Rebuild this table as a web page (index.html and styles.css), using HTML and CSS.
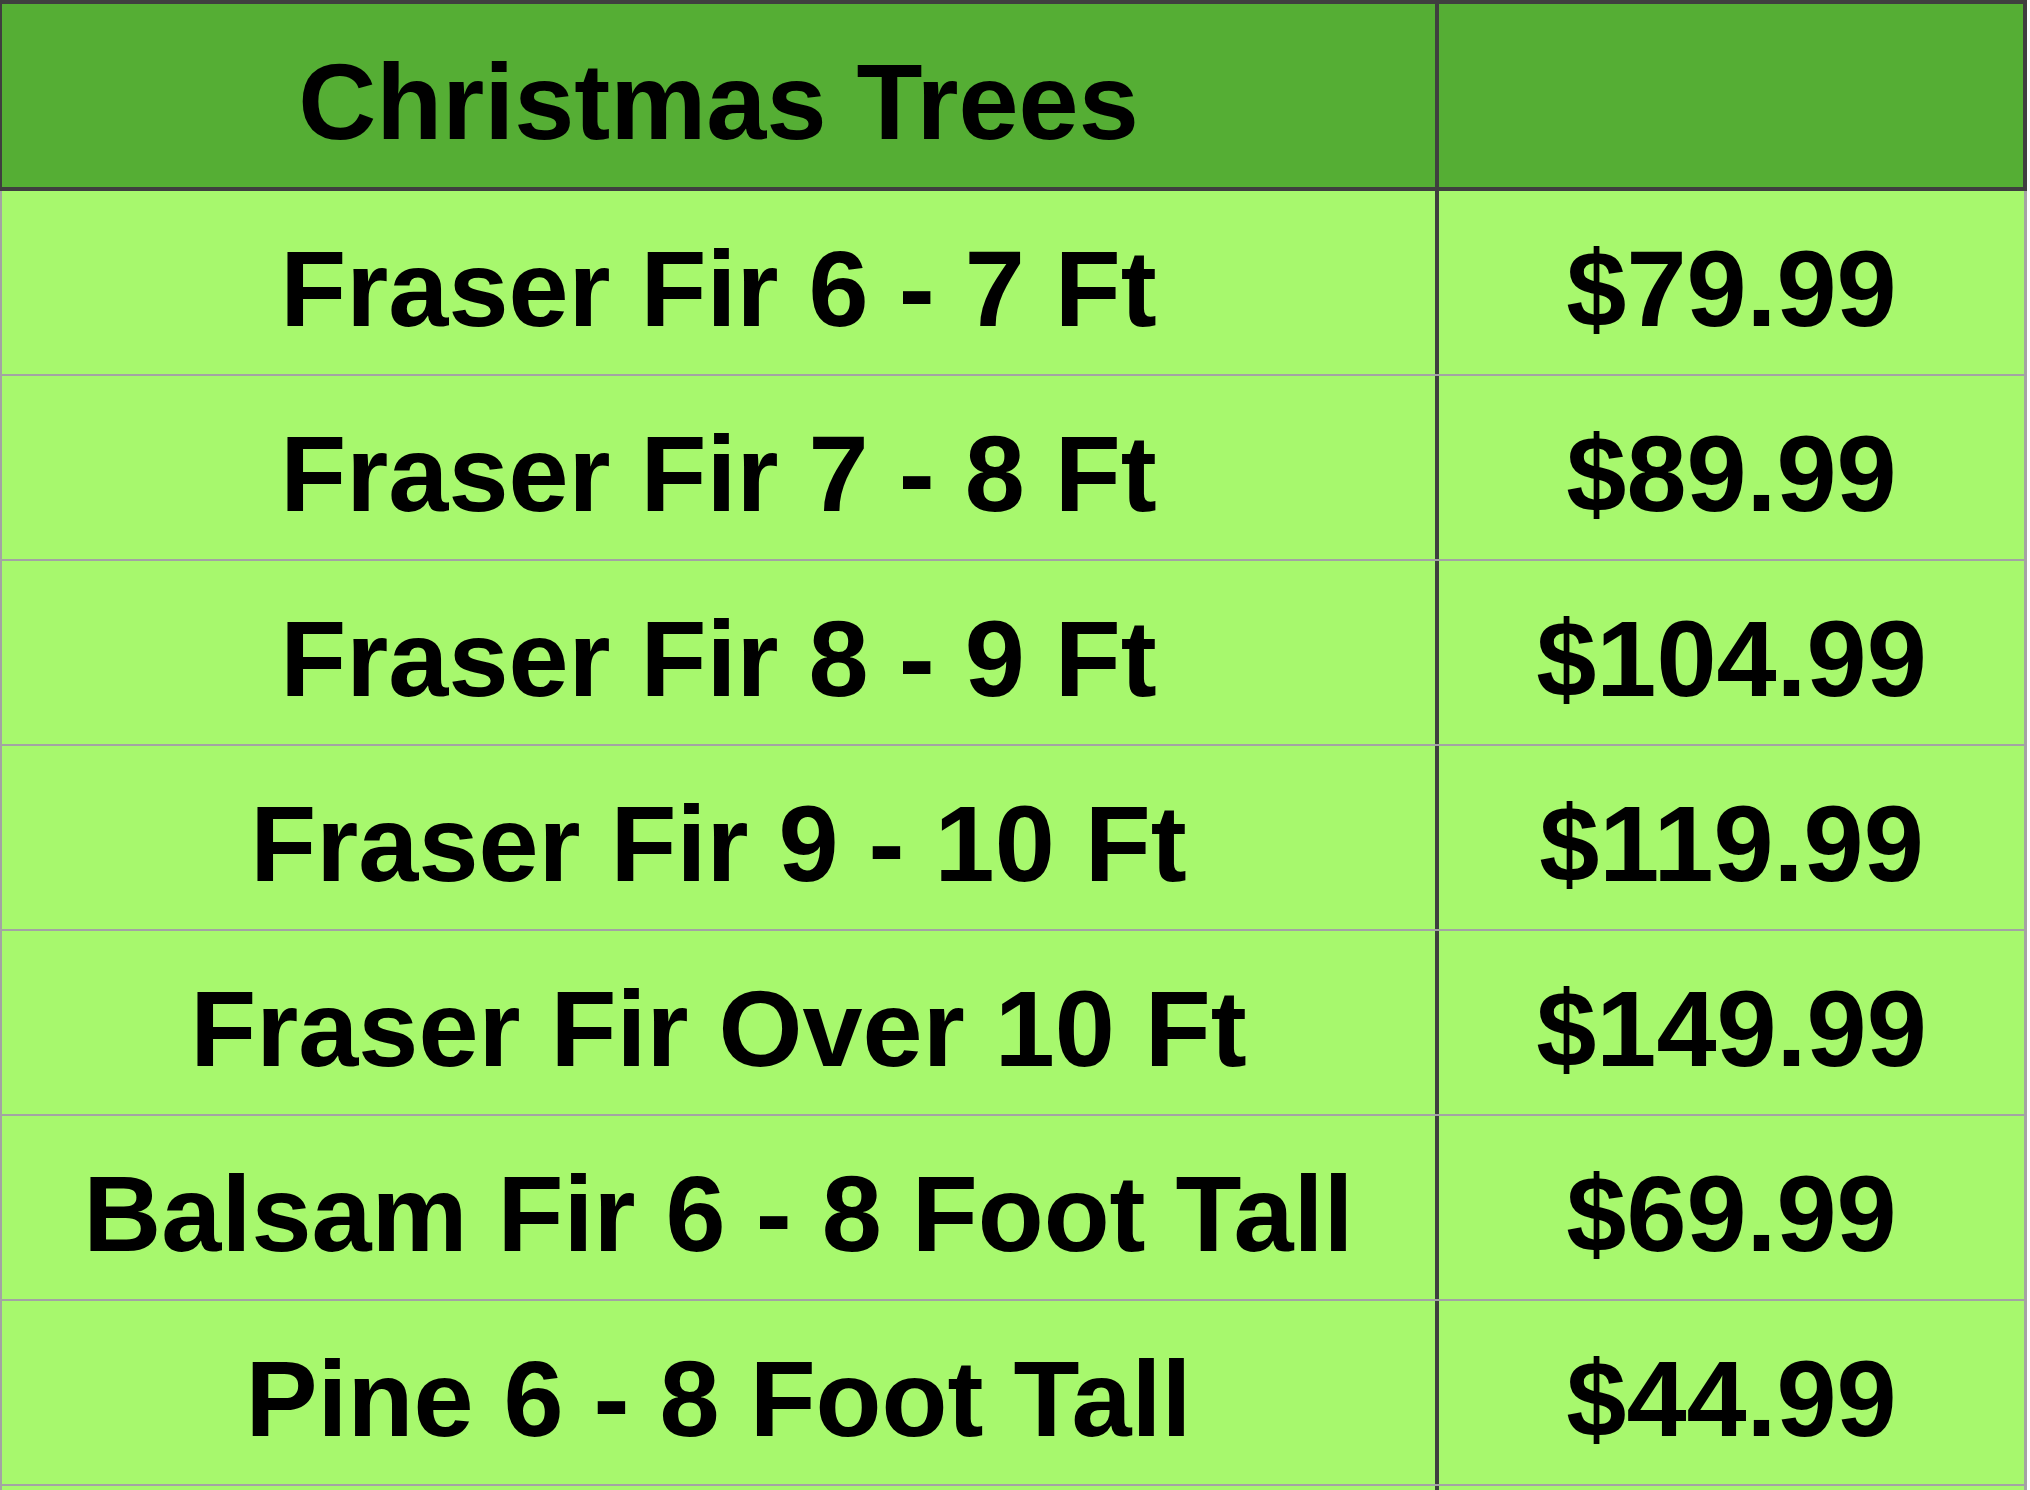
FILE: index.html
```html
<!DOCTYPE html>
<html>
<head>
<meta charset="utf-8">
<link rel="stylesheet" href="styles.css">
</head>
<body>
<div class="sheet">
  <div class="row head">
    <div class="cell name">Christmas Trees</div>
    <div class="cell price"></div>
  </div>
  <div class="row">
    <div class="cell name">Fraser Fir 6 - 7 Ft</div>
    <div class="cell price">$79.99</div>
  </div>
  <div class="row">
    <div class="cell name">Fraser Fir 7 - 8 Ft</div>
    <div class="cell price">$89.99</div>
  </div>
  <div class="row">
    <div class="cell name">Fraser Fir 8 - 9 Ft</div>
    <div class="cell price">$104.99</div>
  </div>
  <div class="row">
    <div class="cell name">Fraser Fir 9 - 10 Ft</div>
    <div class="cell price">$119.99</div>
  </div>
  <div class="row">
    <div class="cell name">Fraser Fir Over 10 Ft</div>
    <div class="cell price">$149.99</div>
  </div>
  <div class="row">
    <div class="cell name">Balsam Fir 6 - 8 Foot Tall</div>
    <div class="cell price">$69.99</div>
  </div>
  <div class="row">
    <div class="cell name">Pine 6 - 8 Foot Tall</div>
    <div class="cell price">$44.99</div>
  </div>
  <div class="row tail">
    <div class="cell name"></div>
    <div class="cell price"></div>
  </div>
</div>
</body>
</html>
```

FILE: styles.css
```css
html, body {
  margin: 0;
  padding: 0;
  background: #ffffff;
}
.sheet {
  width: 2027px;
  display: flex;
  flex-direction: column;
  font-family: "Liberation Sans", Arial, sans-serif;
  font-weight: bold;
  font-size: 108px;
  color: #000;
}
.row {
  display: flex;
  height: 183px;
  flex: 0 0 auto;
  background: #a7f86d;
  border-bottom: 2px solid #a3a3a3;
  border-left: 2px solid #a3a3a3;
  border-right: 3px solid #a3a3a3;
  box-sizing: content-box;
}
.row.head {
  background: #55ae34;
  border-top: 4px solid #3f3f3f;
  border-bottom: 4px solid #3f3f3f;
  border-left: 2px solid #3f3f3f;
  border-right: 4px solid #3f3f3f;
}
.row.tail {
  height: 4px;
  border-bottom: 0;
}
.cell {
  display: flex;
  align-items: center;
  justify-content: center;
  padding-top: 12px;
  box-sizing: border-box;
  white-space: nowrap;
  line-height: normal;
}
.row.tail .cell {
  padding-top: 0;
}
.name {
  width: 1437px;
  border-right: 4px solid #3f3f3f;
}
.price {
  flex: 1 1 auto;
}
```
